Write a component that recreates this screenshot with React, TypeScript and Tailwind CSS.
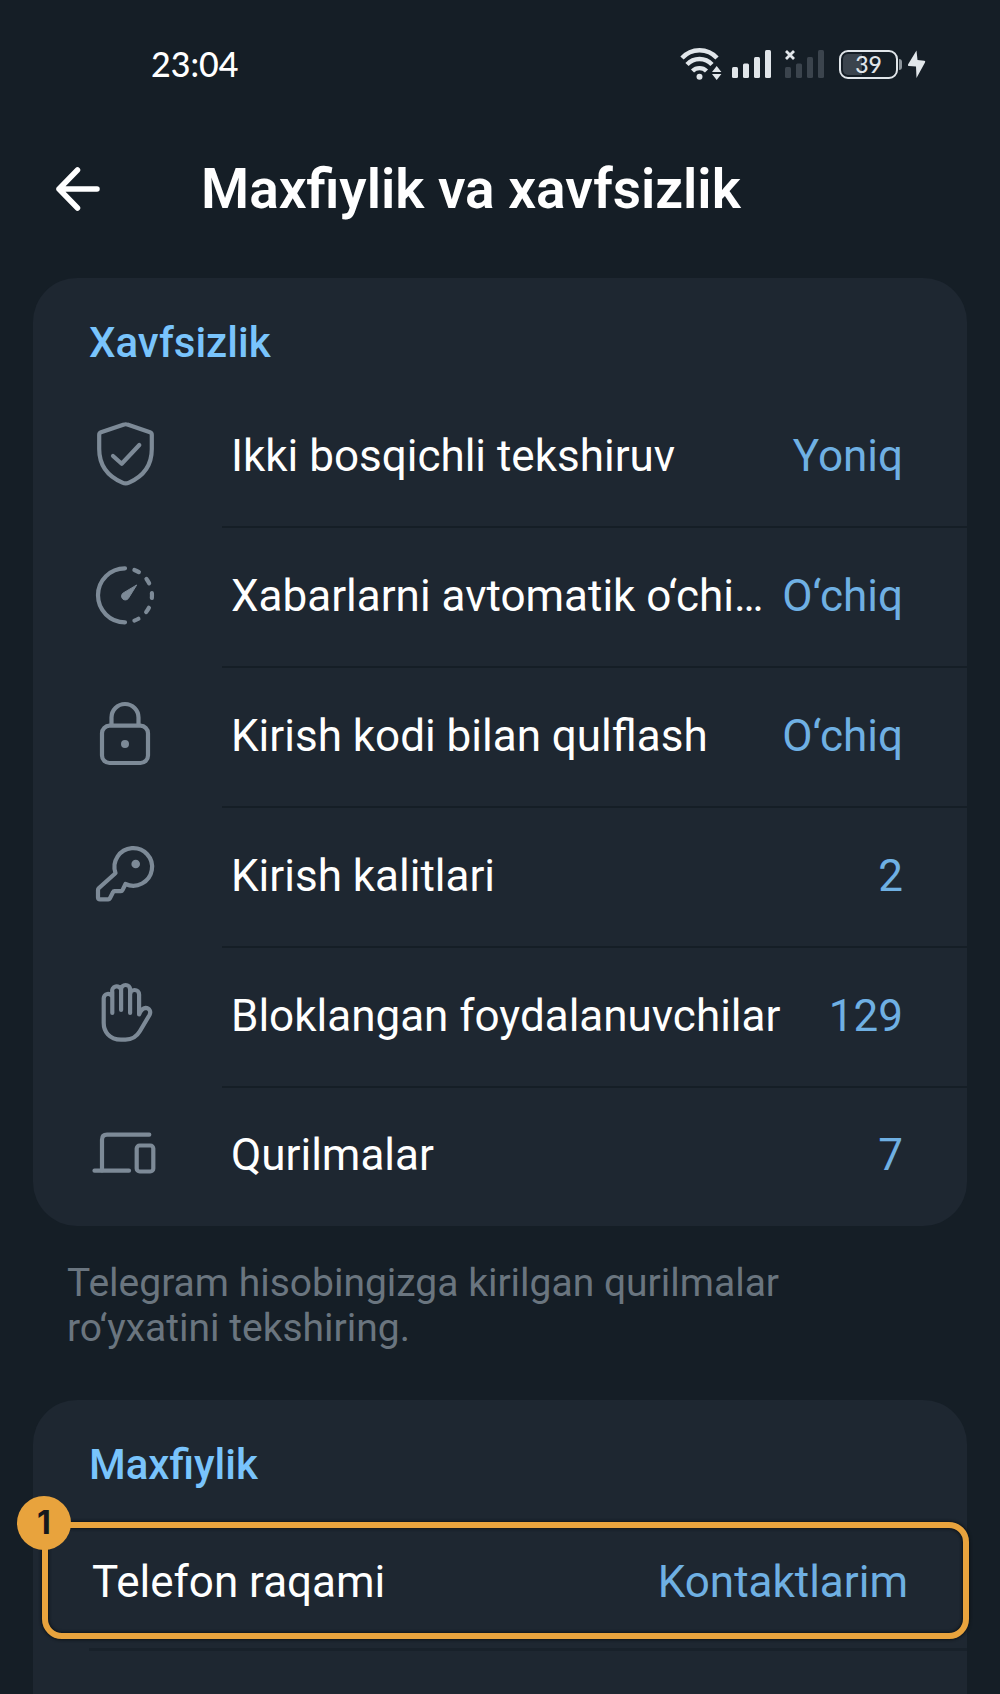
import React from "react";

interface Item {
  label: string;
  value: string;
  icon: React.ReactNode;
}

const securityItems: Item[] = [
  {
    label: "Ikki bosqichli tekshiruv",
    value: "Yoniq",
    icon: (
      <>
        <path d="M35 4.6q1.700-.7 3.400 0L61 12.200q1.800.6 1.800 2.500V29C62.800 45 55 56 40 62.600q-3.300 1.400-6.600 0C18 56 10.200 45 10.200 29V14.700q0-1.900 1.800-2.500Z" />
        <path d="M24 36l8.700 7.700L50.300 25" />
      </>
    ),
  },
  {
    label: "Xabarlarni avtomatik o‘chi…",
    value: "O‘chiq",
    icon: (
      <>
        <path d="M36 8.300a27 27 0 0 0 0 54" />
        <path d="M45.400 10a27 27 0 0 1 0 50.600" strokeDasharray="5 10.200" />
        <path d="M47.500 25.300L39.300 38.500a3.800 3.800 0 1 1-5.500-5.200Z" fill="currentColor" strokeWidth="1" />
      </>
    ),
  },
  {
    label: "Kirish kodi bilan qulflash",
    value: "O‘chiq",
    icon: (
      <>
        <rect x="13" y="25.700" width="46" height="37.300" rx="7.500" />
        <path d="M22.500 25V17.500a13.500 13.500 0 0 1 27 0V25" />
        <circle cx="36" cy="44" r="4" fill="currentColor" stroke="none" />
      </>
    ),
  },
  {
    label: "Kirish kalitlari",
    value: "2",
    icon: (
      <>
        <path d="M26.500 33A18.800 18.800 0 1 1 36.500 44L33.500 50.200Q33 51.200 32 51.200H25.500Q24.400 51.200 24 52.200L20.800 58.500Q20.300 59.400 19.300 59.400H11Q9 59.400 9 57.400V50Q9 49 9.700 48.300L25 34.500Z" />
        <circle cx="46.700" cy="24" r="4.300" fill="currentColor" stroke="none" />
      </>
    ),
  },
  {
    label: "Bloklangan foydalanuvchilar",
    value: "129",
    icon: (
      <path d="M23.300 33V12a4.400 4.400 0 0 1 8.800-2.200V30V9.500a4.500 4.500 0 0 1 9 0V33V14.500a4.500 4.500 0 0 1 9 0V34.500C52 29.500 53.500 28 56.500 27.800C60.500 28 62.300 31.500 60.500 35L51 51Q46 59.600 36.500 59.600H32C20 59.600 14.700 51 14.700 43V18.500a4.400 4.400 0 0 1 8.600-1.500" />
    ),
  },
  {
    label: "Qurilmalar",
    value: "7",
    icon: (
      <>
        <path d="M60.300 14.700H18Q13 14.700 13 19.700V50.500" />
        <path d="M5.500 50.700H40" />
        <rect x="47.700" y="25.500" width="16.600" height="26" rx="3" />
      </>
    ),
  },
];

function SignalBars({ className }: { className: string }) {
  return (
    <svg viewBox="0 0 40 28" className={className} fill="currentColor" aria-hidden="true">
      <rect x="0" y="17" width="6" height="11" rx="1.500" />
      <rect x="11" y="13.500" width="6" height="14.500" rx="1.500" />
      <rect x="22" y="7" width="6" height="21" rx="1.500" />
      <rect x="33" y="0" width="6" height="28" rx="1.500" />
    </svg>
  );
}

function StatusBar() {
  return (
    <div className="flex h-32 items-center pl-[151px] pr-[74px] text-[#e1e6ea]">
      <span className="font-[Lato,sans-serif] text-[34px] leading-10 font-medium text-white">23:04</span>
      <div className="ml-auto flex items-center">
        <svg viewBox="0 0 42 34" className="mr-[10px] h-[34px] w-[42px]" fill="none" stroke="currentColor" strokeWidth="4.400" aria-label="Wi-Fi">
          <path d="M2 11a23.500 23.500 0 0 1 35 0" />
          <path d="M7 17.500a17 17 0 0 1 25 0" />
          <path d="M12.500 24a10 10 0 0 1 14 0" />
          <circle cx="19.500" cy="29.700" r="3" fill="currentColor" stroke="none" />
          <path d="M32 25l4.700-6 4.700 6ZM32 27h9.400l-4.700 6Z" fill="currentColor" stroke="none" />
        </svg>
        <SignalBars className="h-7 w-10" />
        <div className="relative ml-[13px]">
          <SignalBars className="h-7 w-10 text-[#3b444d]" />
          <svg viewBox="0 0 10 10" className="absolute top-0 left-0 h-[10px] w-[10px]" stroke="currentColor" strokeWidth="2.800" aria-hidden="true">
            <path d="M1 1l8 8M9 1l-8 8" />
          </svg>
        </div>
        <div className="ml-[14px] flex h-[29px] w-[59px] items-center justify-center rounded-[9px] border-2 border-current bg-linear-to-r from-[#3b444d] from-38% to-transparent to-38% bg-clip-content p-[2px] font-[Lato,sans-serif] text-[23px] leading-6 font-medium">
          39
        </div>
        <div className="ml-px h-[11px] w-[3px] rounded-r bg-[#8c949b]" />
        <svg viewBox="0 0 19 28" className="ml-[5px] h-7 w-[19px]" fill="currentColor" aria-hidden="true">
          <path d="M9.500 0.500L1 14.500Q0.500 16 2 16L9 16.500L9.500 28L18 12.500Q18.800 11 17.300 10.800L10.500 10Z" />
        </svg>
      </div>
    </div>
  );
}

function SecurityRow({ item, last }: { item: Item; last: boolean }) {
  return (
    <li className="flex">
      <button type="button" className="flex min-w-0 flex-1 text-left">
        <svg
          viewBox="0 0 72 72"
          className="mt-8 mr-[61px] ml-14 h-[72px] w-[72px] shrink-0 text-[#7d8a97]"
          fill="none"
          stroke="currentColor"
          strokeWidth="4.200"
          strokeLinecap="round"
          strokeLinejoin="round"
          aria-hidden="true"
        >
          {item.icon}
        </svg>
        <span
          className={`flex min-w-0 flex-1 items-center gap-1 pr-16 pl-[9px] text-[44px] leading-[56px] ${
            last ? "h-[138px] pb-1" : "h-[140px] border-b-2 border-[#151e26] pb-[2px]"
          }`}
        >
          <span className="min-w-0 flex-1 truncate">{item.label}</span>
          <span className="text-[#6fb0e3]">{item.value}</span>
        </span>
      </button>
    </li>
  );
}

export default function App() {
  return (
    <div className="flex min-h-screen flex-col bg-[#151e26] font-[Roboto,sans-serif] text-white">
      <StatusBar />

      <header className="flex h-[122px] items-center pl-14">
        <button type="button" aria-label="Orqaga" className="mr-[101px]">
          <svg viewBox="0 0 44 44" className="h-11 w-11" fill="none" stroke="currentColor" strokeWidth="5.500" strokeLinecap="round" strokeLinejoin="round">
            <path d="M41 22H3M21.500 3L3 22l18.500 19" />
          </svg>
        </button>
        <h1 className="text-[55px] leading-[64px] font-semibold">Maxfiylik va xavfsizlik</h1>
      </header>

      <main className="flex flex-1 flex-col px-[33px] pt-7">
        <section className="rounded-[44px] bg-[#1e2731]">
          <h2 className="px-14 pt-10 pb-5 text-[42px] leading-[50px] font-medium text-[#79c4fc]">Xavfsizlik</h2>
          <ul>
            {securityItems.map((item, i) => (
              <SecurityRow key={item.label} item={item} last={i === securityItems.length - 1} />
            ))}
          </ul>
        </section>

        <p className="max-w-[800px] pt-[35px] pb-[49px] pl-[34px] text-[39px] leading-[45px] text-[#6a757f]">
          Telegram hisobingizga kirilgan qurilmalar ro‘yxatini tekshiring.
        </p>

        <section className="flex-1 rounded-t-[44px] bg-[#1e2731]">
          <h2 className="px-14 pt-10 pb-8 text-[42px] leading-[50px] font-medium text-[#79c4fc]">Maxfiylik</h2>
          {/* Ajratilgan qator */}
          <div className="relative -mr-[2px] ml-[9px]">
            <button
              type="button"
              className="flex h-[117px] w-full items-center justify-between rounded-[20px] border-6 border-[#e8a33d] pt-[3px] pr-[55px] pl-[44px] text-[44px] leading-[56px] shadow-[0_0_3px_1px_#0d1318,inset_0_0_3px_1px_#0d1318]"
            >
              <span>Telefon raqami</span>
              <span className="text-[#6fb0e3]">Kontaktlarim</span>
            </button>
            <span className="absolute -top-[26px] -left-[25px] flex h-[54px] w-[54px] items-center justify-center rounded-full bg-[#e8a33d] font-[Inter,sans-serif] text-[32px] leading-10 font-bold text-[#14181c]">
              1
            </span>
          </div>
          <div className="mt-[9px] ml-14 h-[3px] bg-[#18212a]" />
        </section>
      </main>
    </div>
  );
}
